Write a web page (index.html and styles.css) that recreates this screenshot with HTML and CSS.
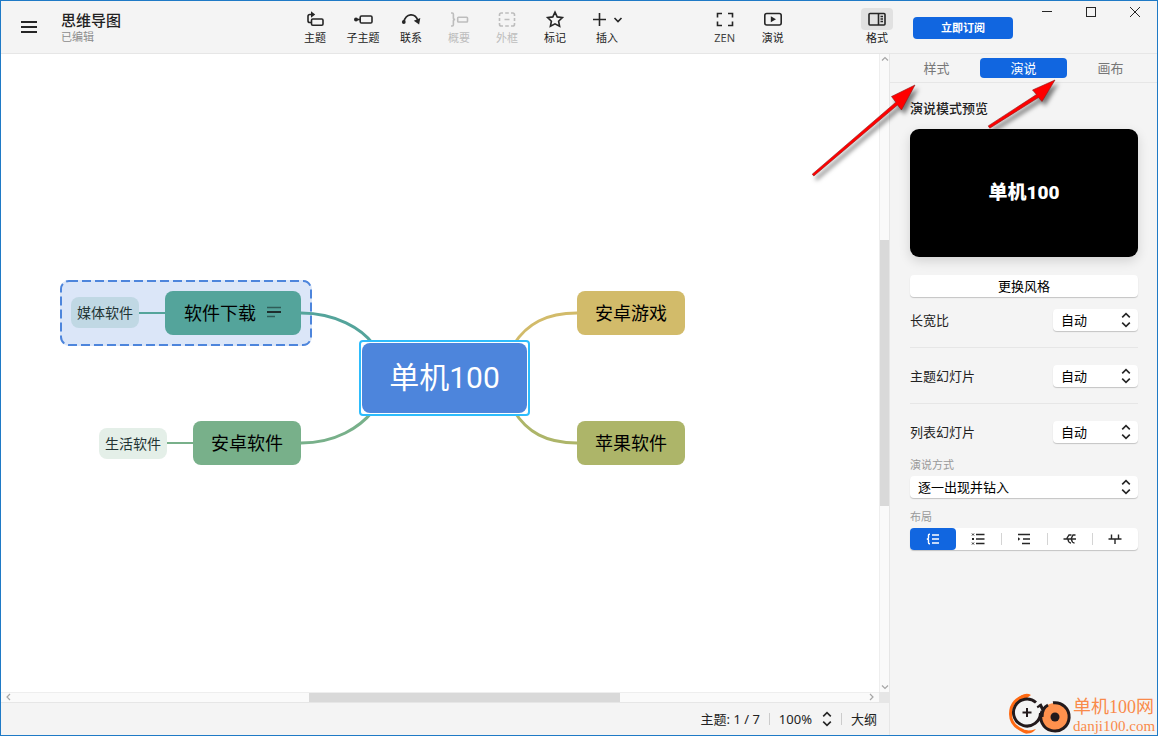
FILE: index.html
```html
<!DOCTYPE html>
<html lang="zh-CN">
<head>
<meta charset="utf-8">
<title>思维导图</title>
<link rel="stylesheet" href="styles.css">
</head>
<body>
<svg class="defs" aria-hidden="true">
  <symbol id="updown" viewBox="0 0 10 16"><path d="M1.2 5.4L5 1.6l3.8 3.8M1.2 10.6L5 14.4l3.8-3.8"/></symbol>
</svg>
<div class="window">
  <header class="header">
    <button class="menu-btn" type="button" aria-label="菜单">
      <svg class="icon" width="16" height="14" viewBox="0 0 16 14"><path d="M0 2h16M0 7h16M0 12h16"/></svg>
    </button>
    <div class="doc">
      <h1 class="doc-title">思维导图</h1>
      <span class="doc-state">已编辑</span>
    </div>
    <nav class="tools">
      <button class="tool" type="button">
        <span class="tool-icon"><svg class="icon" width="20" height="18" viewBox="0 0 20 18"><rect x="6.500" y="9" width="11.500" height="6.200" rx="1.200"/><path d="M6 12.500H4.800Q3 12.500 3 10.700V6.300Q3 4.500 4.800 4.500H7"/><path class="solid" d="M6 1.300L10.200 4.500 6 7.700z"/></svg></span>
        <span>主题</span>
      </button>
      <button class="tool" type="button">
        <span class="tool-icon"><svg class="icon" width="20" height="18" viewBox="0 0 20 18"><rect x="7.200" y="6" width="11.800" height="7" rx="1.300"/><path d="M3 9.500h4"/><circle class="solid" cx="3" cy="9.500" r="2"/></svg></span>
        <span>子主题</span>
      </button>
      <button class="tool" type="button">
        <span class="tool-icon"><svg class="icon" width="20" height="18" viewBox="0 0 20 18"><path d="M2.800 12C5 3 14 2.500 17 10.500"/><circle class="solid" cx="2.800" cy="12" r="1.900"/><path class="solid" d="M12.800 10.800L19.300 8l-1.200 6.500z"/></svg></span>
        <span>联系</span>
      </button>
      <button class="tool" type="button" disabled>
        <span class="tool-icon"><svg class="icon" width="20" height="18" viewBox="0 0 20 18"><rect x="8.700" y="7.200" width="9.800" height="4.800" rx=".8"/><path d="M2 3h1.200Q4.400 3 4.400 4.200V8q0 1.500 1.800 1.500-1.800 0-1.800 1.500v3.800q0 1.200-1.200 1.200H2"/></svg></span>
        <span>概要</span>
      </button>
      <button class="tool" type="button" disabled>
        <span class="tool-icon"><svg class="icon" width="20" height="18" viewBox="0 0 20 18"><path d="M2.500 6V4.800Q2.500 3 4.300 3H6M8.200 3h3.600M14 3h1.700Q17.500 3 17.500 4.800V6M17.500 8v3M17.500 13v1.200q0 1.800-1.800 1.800H14M11.800 16H8.200M6 16H4.300q-1.800 0-1.800-1.800V13M2.500 11V8M7.500 9.500h5"/></svg></span>
        <span>外框</span>
      </button>
      <button class="tool" type="button">
        <span class="tool-icon"><svg class="icon" width="20" height="18" viewBox="0 0 20 18"><path d="M10 2.200l2.200 4.700 5.200.7-3.800 3.600 1 5.100L10 13.800l-4.600 2.500 1-5.100-3.800-3.600 5.200-.7z"/></svg></span>
        <span>标记</span>
      </button>
      <button class="tool tool-wide" type="button">
        <span class="tool-icon"><svg class="icon" width="32" height="18" viewBox="0 0 32 18"><path d="M8.500 3v13M2 9.500h13M23.500 8l3.500 3.500L30.500 8"/></svg></span>
        <span>插入</span>
      </button>
    </nav>
    <nav class="tools tools-view">
      <button class="tool" type="button">
        <span class="tool-icon"><svg class="icon" width="20" height="18" viewBox="0 0 20 18"><path d="M2.500 7.500V3.500h4.500M2.500 11.500v4h4.500M17.500 7.500V3.500H13M17.500 11.500v4H13"/></svg></span>
        <span class="latin">ZEN</span>
      </button>
      <button class="tool" type="button">
        <span class="tool-icon"><svg class="icon" width="20" height="18" viewBox="0 0 20 18"><rect x="1.800" y="3.500" width="16.400" height="11.500" rx="2"/><path class="solid" d="M7.800 6.300L13 9.300 7.800 12.300z"/></svg></span>
        <span>演说</span>
      </button>
    </nav>
    <div class="header-end">
      <button class="tool tool-active" type="button">
        <span class="tool-icon"><svg class="icon" width="20" height="18" viewBox="0 0 20 18"><rect x="2" y="3.500" width="16" height="11.500" rx="1"/><path d="M11.500 3.500v11.500M13.500 6.500H16M13.500 9H16M13.500 11.500H16"/></svg></span>
        <span>格式</span>
      </button>
      <button class="subscribe" type="button">立即订阅</button>
      <div class="win-controls">
        <button class="win-btn" type="button" aria-label="最小化"><svg class="icon thin" width="12" height="12" viewBox="0 0 12 12"><path d="M1 5.500h10"/></svg></button>
        <button class="win-btn" type="button" aria-label="最大化"><svg class="icon thin" width="12" height="12" viewBox="0 0 12 12"><rect x="1.500" y="1.500" width="9" height="9"/></svg></button>
        <button class="win-btn" type="button" aria-label="关闭"><svg class="icon thin" width="12" height="12" viewBox="0 0 12 12"><path d="M1 1l10 10M11 1L1 11"/></svg></button>
      </div>
    </div>
  </header>

  <div class="body">
    <main class="workspace">
      <div class="viewport">
        <div class="canvas">
          <div class="boundary"><svg width="100%" height="100%"><rect class="boundary-line" x="1" y="1" width="250" height="64" rx="8"/></svg></div>
          <svg class="links" width="700" height="420" viewBox="0 0 700 420">
            <path class="link teal" d="M300 259C335 259 361 275 372 290"/>
            <path class="link green" d="M300 389C335 389 359 373 372 357"/>
            <path class="link gold" d="M576 259C545 259 526 270 513 290"/>
            <path class="link olive" d="M576 389C545 389 526 378 513 357"/>
            <path class="link sub teal" d="M138 259h27"/>
            <path class="link sub green" d="M166 389h27"/>
          </svg>
          <div class="node leaf leaf-media">媒体软件</div>
          <div class="node leaf leaf-life">生活软件</div>
          <div class="node branch branch-download">软件下载<svg class="icon note" width="16" height="14" viewBox="0 0 16 14"><path class="faint" d="M1 1.500h14M1 10.500h8"/><path d="M1 6h14"/></svg></div>
          <div class="node branch branch-android">安卓软件</div>
          <div class="node branch branch-game">安卓游戏</div>
          <div class="node branch branch-apple">苹果软件</div>
          <div class="root-frame"><div class="node root">单机100</div></div>
        </div>
        <div class="scroll-v">
          <svg class="icon chev" width="10" height="10" viewBox="0 0 10 10"><path d="M2 6.500l3-3 3 3"/></svg>
          <div class="track-v"><div class="thumb-v"></div></div>
          <svg class="icon chev" width="10" height="10" viewBox="0 0 10 10"><path d="M2 3.500l3 3 3-3"/></svg>
        </div>
        <div class="scroll-h">
          <svg class="icon chev" width="14" height="10" viewBox="0 0 14 10"><path d="M9 1L6 4l3 3"/></svg>
          <div class="track-h"><div class="thumb-h"></div></div>
          <svg class="icon chev" width="14" height="10" viewBox="0 0 14 10"><path d="M5 1l3 3-3 3"/></svg>
        </div>
        <div class="corner"></div>
      </div>
      <footer class="status">
        <span>主题: 1 / 7</span>
        <span class="sep"></span>
        <button class="status-btn" type="button">100%<svg class="icon" width="10" height="16"><use href="#updown"/></svg></button>
        <span class="sep"></span>
        <button class="status-btn" type="button">大纲</button>
      </footer>
    </main>

    <aside class="panel">
      <div class="tabs" role="tablist">
        <button class="tab" role="tab" type="button">样式</button>
        <button class="tab tab-on" role="tab" aria-selected="true" type="button">演说</button>
        <button class="tab" role="tab" type="button">画布</button>
      </div>
      <div class="panel-body">
        <h2 class="panel-title">演说模式预览</h2>
        <div class="preview">单机100</div>
        <button class="wide-btn" type="button">更换风格</button>
        <div class="row">
          <label for="ratio">长宽比</label>
          <span class="select short"><select id="ratio"><option>自动</option></select><svg class="icon" width="10" height="16"><use href="#updown"/></svg></span>
        </div>
        <div class="row">
          <label for="topic">主题幻灯片</label>
          <span class="select short"><select id="topic"><option>自动</option></select><svg class="icon" width="10" height="16"><use href="#updown"/></svg></span>
        </div>
        <div class="row">
          <label for="list">列表幻灯片</label>
          <span class="select short"><select id="list"><option>自动</option></select><svg class="icon" width="10" height="16"><use href="#updown"/></svg></span>
        </div>
        <label class="caption caption-first" for="mode">演说方式</label>
        <span class="select"><select id="mode"><option>逐一出现并钻入</option></select><svg class="icon" width="10" height="16"><use href="#updown"/></svg></span>
        <span class="caption" id="layout-label">布局</span>
        <div class="segments" role="group" aria-labelledby="layout-label">
          <button class="seg seg-on" type="button" aria-label="括号"><svg class="icon" width="16" height="12" viewBox="0 0 16 12"><path d="M5 1.200H4.500Q3.500 1.200 3.500 2.200V5Q3.500 6 1.800 6 3.500 6 3.500 7v2.800q0 1 1 1H5M7 2h7M7 6h7M7 10h7"/></svg></button>
          <button class="seg" type="button" aria-label="列表"><svg class="icon" width="16" height="12" viewBox="0 0 16 12"><path d="M6 1.500h8.500M6 6h8.500M6 10.500h8.500"/><path class="ticks" d="M2 .5l2 2M4 .5l-2 2M2 5l2 2M4 5L2 7M2 9.500l2 2M4 9.500l-2 2"/></svg></button>
          <button class="seg" type="button" aria-label="缩进"><svg class="icon" width="16" height="12" viewBox="0 0 16 12"><path d="M2 1.500h12M7 6h7M6 10.500h8"/><path class="solid" d="M2 4.300L4.300 6 2 7.700z"/></svg></button>
          <button class="seg" type="button" aria-label="鱼骨"><svg class="icon" width="16" height="12" viewBox="0 0 16 12"><path d="M1.500 6H14M4.500 6L7 2h2.500M9 6l2-4h2.500M6 6.500Q6.500 10 9 10M9.500 6.500Q10 10 12.500 10"/></svg></button>
          <button class="seg" type="button" aria-label="时间轴"><svg class="icon" width="16" height="12" viewBox="0 0 16 12"><path d="M1.500 6h13M4.500 6V1.500M11.500 6V1.500M8 6v5"/></svg></button>
        </div>
      </div>
    </aside>
  </div>

  <svg class="arrows" width="260" height="110" viewBox="0 0 260 110" aria-hidden="true">
    <path d="M6.200 97.200L89.800 25.200 85.500 19.500 109 8 95.500 33 91.500 28 7.800 99z"/>
    <path d="M182.200 48.900L230.500 17.500 226.500 13 249 3 236 24.500 232.500 20.500 183.800 51.200z"/>
  </svg>

  <div class="watermark">
    <svg width="64" height="42" viewBox="0 0 64 42" aria-hidden="true">
      <path class="wm-arc" d="M18 3C8 4 1.500 11 1.500 21c0 9 6 14 13 17l4 1"/>
      <path class="wm-wing" d="M6 9C10 2 17-1 22 2L18 5Q12 5 6 11z"/>
      <path class="wm-wing" d="M12 36Q18 39 27 36 22 42 15 40z"/>
      <circle class="wm-face" cx="18" cy="20" r="13.500"/>
      <path class="wm-ring" d="M27 9.500A13.500 13.500 0 1 0 31.500 20M29 12.500l1 2"/>
      <circle class="wm-disc" cx="46" cy="24" r="14"/>
      <path class="wm-ring" d="M44 9.800A14.200 14.200 0 1 1 33 18M31 11l3 6M39 12q-6 3-6 12"/>
      <circle class="wm-dot" cx="46" cy="24" r="4.500"/>
      <path class="wm-plus" d="M18 15v9M13.500 19.500h9"/>
    </svg>
    <div class="wm-text"><span class="wm-name">单机100网</span><span class="wm-site">danji100.com</span></div>
  </div>
</div>
</body>
</html>
```
FILE: styles.css
```css
* { box-sizing: border-box; }
html, body { height: 100%; margin: 0; }
body {
  font-family: "Noto Sans", "Noto Sans CJK SC", sans-serif;
  font-size: 13px;
  line-height: 20px;
  color: #222;
  overflow: hidden;
}
button, select { font: inherit; color: inherit; border: 0; padding: 0; background: none; }
h1, h2 { margin: 0; }
.defs { position: absolute; width: 0; height: 0; }
.icon { display: block; fill: none; stroke: #262626; stroke-width: 1.6; overflow: visible; }
.icon .solid { fill: #262626; stroke: none; }
.icon.thin { stroke-width: 1; }

.window {
  position: relative;
  display: flex;
  flex-direction: column;
  height: 100%;
  border: 1px solid #1f7ac6;
  background: #f4f4f4;
}

/* header */
.header { display: flex; flex: none; height: 53px; border-bottom: 1px solid #e6e6e6; }
.menu-btn { display: flex; align-items: center; justify-content: center; width: 56px; }
.menu-btn .icon { stroke-width: 2; }
.doc { display: flex; flex-direction: column; width: 234px; padding: 9px 0 0 4px; }
.doc-title { font-size: 15px; line-height: 20px; font-weight: 500; }
.doc-state { font-size: 11px; line-height: 14px; color: #8c8c8c; }
.tools, .header-end { display: flex; }
.tools { flex: 7 0 auto; }
.tools-view { flex-grow: 6; }
.tool {
  display: flex;
  flex-direction: column;
  align-items: center;
  width: 48px;
  padding-top: 7px;
  font-size: 11px;
  line-height: 16px;
}
.tool-wide { width: 56px; }
.tool-icon { display: flex; align-items: center; justify-content: center; width: 32px; height: 22px; border-radius: 4px; }
.tool:disabled { color: #bdbdbd; }
.tool:disabled .icon { stroke: #bdbdbd; }
.tool-active .tool-icon { background: #e1e1e1; }
.latin { color: #444; }
.subscribe {
  width: 100px;
  height: 22px;
  margin: 16px 12px 0;
  border-radius: 4px;
  background: #1166e0;
  color: #fff;
  font-size: 11px;
  line-height: 20px;
  font-weight: 700;
}
.win-controls { display: flex; height: 22px; }
.win-btn { display: flex; align-items: center; justify-content: center; width: 44px; }

/* workspace */
.body { display: flex; flex: 1; min-height: 0; }
.workspace { display: flex; flex-direction: column; flex: 1; min-width: 0; }
.viewport {
  display: grid;
  grid-template: 1fr 10px / 1fr 10px;
  flex: 1;
  min-height: 0;
  background: #fff;
}
.canvas { position: relative; overflow: hidden; min-width: 0; }
.links { position: absolute; left: 0; top: 0; fill: none; }
.link { stroke-width: 3; }
.sub { stroke-width: 2; }
.teal { stroke: #54a49b; }
.green { stroke: #78b08a; }
.gold { stroke: #d2bb6a; }
.olive { stroke: #adb569; }
.node { position: absolute; display: flex; align-items: center; justify-content: center; border-radius: 8px; }
.leaf { width: 68px; height: 31px; font-size: 14px; color: #233; }
.branch { width: 108px; height: 44px; font-size: 18px; color: #000; }
.leaf-media { left: 70px; top: 243px; background: #c0d8e4; }
.leaf-life { left: 98px; top: 374px; background: #e4efe8; }
.branch-download { left: 164px; top: 237px; width: 136px; gap: 10px; background: #54a49b; }
.branch-android { left: 192px; top: 367px; background: #78b08a; }
.branch-game { left: 576px; top: 237px; background: #d2bb6a; }
.branch-apple { left: 576px; top: 367px; background: #adb569; }
.note { stroke: #111; stroke-width: 1.6; }
.faint { stroke: #2f5c58; }
.boundary { position: absolute; left: 59px; top: 226px; width: 252px; height: 66px; border-radius: 9px; background: #dbe6f8; }
.boundary svg { display: block; }
.boundary-line { fill: none; stroke: #4d85dc; stroke-width: 2; stroke-dasharray: 9 4; }
.root-frame {
  position: absolute;
  left: 358px;
  top: 286px;
  padding: 1px;
  border: 2px solid #2dbcfc;
  border-radius: 4px;
  background: #fff;
}
.root {
  position: static;
  width: 165px;
  height: 70px;
  background: #4d85dc;
  color: #fff;
  font-family: Roboto, "Noto Sans CJK SC", sans-serif;
  font-size: 30px;
}

.scroll-v { display: flex; flex-direction: column; background: #fafafa; border-left: 1px solid #eee; }
.track-v { flex: 1; }
.thumb-v { height: 43%; margin-top: 176px; background: #d9d9d9; }
.scroll-h { display: flex; background: #fafafa; border-top: 1px solid #eee; }
.track-h { flex: 1; padding-left: 294px; }
.thumb-h { width: 56%; height: 9px; background: #d9d9d9; }
.corner { background: #e6e6e6; }
.chev { stroke: #a6a6a6; stroke-width: 1.2; }
.status {
  display: flex;
  align-items: center;
  justify-content: flex-end;
  gap: 9px;
  flex: none;
  height: 33px;
  padding-right: 12px;
  border-top: 1px solid #e6e6e6;
}
.status-btn { display: flex; align-items: center; gap: 10px; }
.sep { width: 1px; height: 12px; background: #ccc; }

/* format panel */
.panel { flex: none; width: 268px; border-left: 1px solid #e6e6e6; }
.tabs { display: flex; padding: 4px 3px; border-bottom: 1px solid #e6e6e6; }
.tab { flex: 1; height: 20px; border-radius: 4px; color: #777; line-height: 18px; }
.tab-on { background: #1166e0; color: #fff; }
.panel-body { padding: 15px 19px 0 20px; }
.panel-title { font-size: 13px; font-weight: 500; color: #222; }
.preview {
  display: flex;
  align-items: center;
  justify-content: center;
  height: 128px;
  margin: 11px 0 18px;
  border-radius: 9px;
  background: #000;
  color: #fff;
  font: 900 19px/28px Roboto, "Noto Sans CJK SC", sans-serif;
  box-shadow: 0 4px 12px rgba(0, 0, 0, .14);
}
.wide-btn, .select, .segments { background: #fff; border-radius: 4px; box-shadow: 0 1px 1px rgba(0, 0, 0, .2); }
.wide-btn { display: block; width: 100%; height: 22px; margin-bottom: 12px; color: #000; line-height: 18px; }
.row { display: flex; align-items: center; justify-content: space-between; height: 22px; }
.row + .row { position: relative; height: 56px; padding-top: 34px; }
.row + .row::before { content: ""; position: absolute; left: 0; right: 0; top: 16px; border-top: 1px solid #e6e6e6; }
.select { position: relative; display: block; height: 22px; }
.short { width: 85px; }
.select select { appearance: none; width: 100%; height: 22px; padding: 0 24px 0 8px; color: #000; }
.select .icon { position: absolute; right: 7px; top: 3px; pointer-events: none; }
.caption { display: block; margin: 11px 0 3px; font-size: 11px; line-height: 16px; color: #999; }
.caption-first { margin-top: 14px; }
.segments { display: flex; }
.seg { display: flex; flex: 1; align-items: center; justify-content: center; height: 22px; position: relative; }
.seg .icon { stroke-width: 1.4; }
.seg .ticks { stroke-width: 1; }
.seg-on { border-radius: 4px; background: #1166e0; }
.seg-on .icon { stroke: #fff; }
.seg + .seg + .seg::before { content: ""; position: absolute; left: 0; top: 5px; height: 12px; border-left: 1px solid #d4d4d4; }

/* overlays */
.arrows { position: absolute; right: 91px; top: 76px; pointer-events: none; filter: drop-shadow(3px 4px 2px rgba(0, 0, 0, .5)); }
.arrows path { fill: #f00; stroke: #8a1a1a; stroke-width: .6; }
.watermark { position: absolute; right: 2px; bottom: 0; display: flex; align-items: flex-end; pointer-events: none; }
.wm-text { display: flex; flex-direction: column; width: 82px; color: #f98a4a; font-family: "Liberation Serif", "Noto Sans CJK SC", serif; white-space: nowrap; }
.wm-name { font-size: 18px; line-height: 20px; }
.wm-site { font-size: 15px; line-height: 18px; }
.wm-arc { fill: none; stroke: #ff6a13; stroke-width: 3; }
.wm-wing { fill: #ff6a13; }
.wm-face { fill: #f4f4f4; }
.wm-disc { fill: #ff914d; }
.wm-ring { fill: none; stroke: #231a1c; stroke-width: 3; }
.wm-dot { fill: #231a1c; }
.wm-plus { stroke: #231a1c; stroke-width: 2; }
```
